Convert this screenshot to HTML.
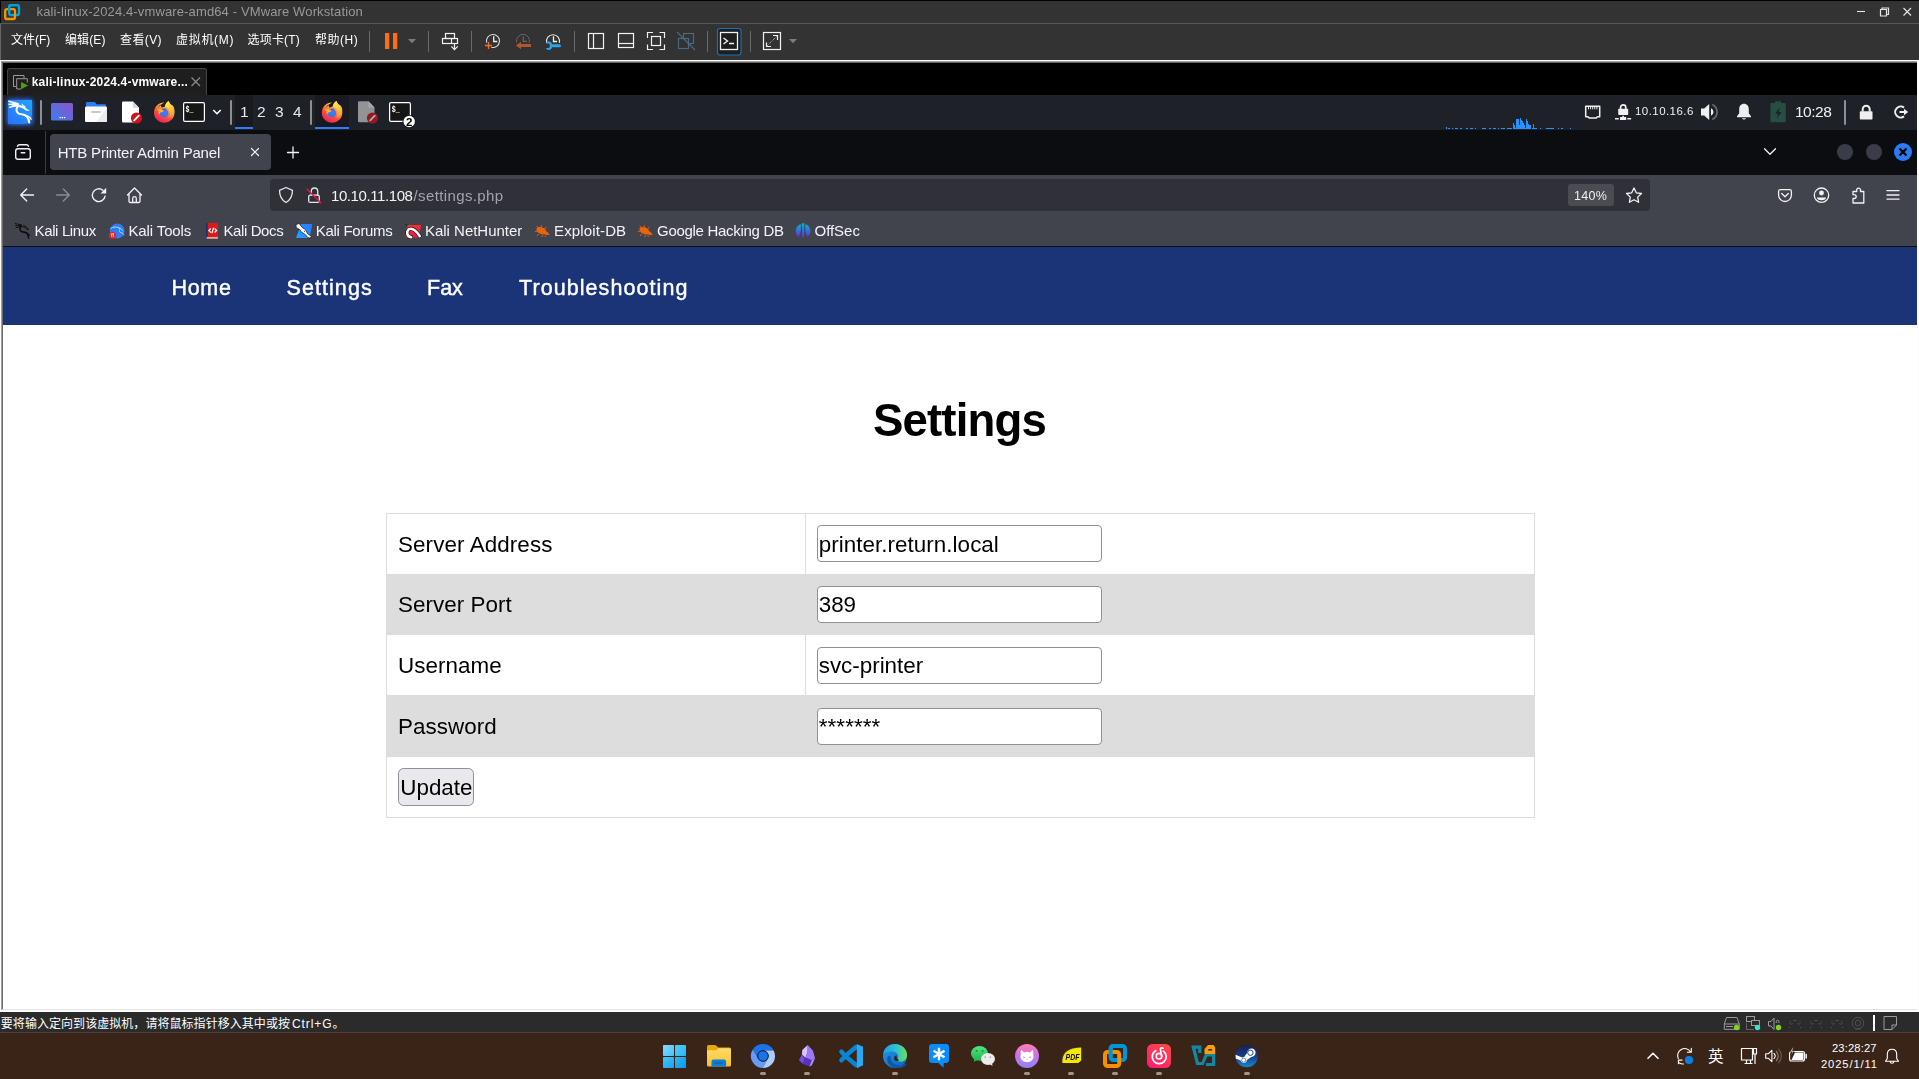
<!DOCTYPE html>
<html lang="zh-CN">
<head>
<meta charset="utf-8">
<title>kali-linux-2024.4-vmware-amd64 - VMware Workstation</title>
<style>
*{box-sizing:border-box;margin:0;padding:0}
html,body{width:1919px;height:1079px;overflow:hidden;background:#000}
body{position:relative;font-family:"Liberation Sans","Noto Sans CJK SC",sans-serif;color:#fff}
.a{position:absolute}
.t{position:absolute;white-space:nowrap;line-height:1;display:block}
svg{position:absolute;overflow:visible}
.gl{position:absolute;left:0;top:0;width:1919px;height:1079px;will-change:transform;pointer-events:none}
/* ---------- VMware chrome ---------- */
#vm-title{left:0;top:0;width:1919px;height:24px;background:#333}
#vm-title-top{left:0;top:0;width:1919px;height:1px;background:#000}
#vm-title-l{left:0;top:0;width:1px;height:23px;background:#000}
#vm-title-line{left:0;top:23px;width:1919px;height:1px;background:#575757}
#vm-menu{left:0;top:24px;width:1919px;height:36px;background:#333}
#vm-menu-l{left:0;top:24px;width:1px;height:36px;background:#666}
#vm-b1{left:0;top:60px;width:1919px;height:1px;background:#fdfdfd}
#vm-b2{left:1px;top:61px;width:1917px;height:1px;background:#a0a0a0}
#vm-b3{left:2px;top:62px;width:1915px;height:1px;background:#696969}
#vm-l1{left:0;top:60px;width:1px;height:952px;background:#fdfdfd}
#vm-l2{left:1px;top:61px;width:1px;height:949px;background:#a0a0a0}
#vm-l3{left:2px;top:62px;width:1px;height:947px;background:#696969}
#vm-r1{left:1917px;top:61px;width:2px;height:951px;background:#fdfdfd}
#vm-tabstrip{left:3px;top:63px;width:1914px;height:32px;background:#000}
#vm-tab{left:7px;top:68px;width:200px;height:28px;background:#1e1e1e;border:1px solid #454545;border-bottom:none;border-radius:3px 3px 0 0}
/* ---------- Kali panel ---------- */
#kpanel{left:3px;top:95px;width:1914px;height:35px;background:#1f2128}
.ksep{width:2px;height:25px;top:100px;background:#5d5f66;border-radius:1px}
.kact{top:95px;height:32px;background:#191a20}
.kund{top:127px;height:2px;background:#2a7fff}
/* ---------- Firefox ---------- */
#fx-tabs{left:3px;top:130px;width:1914px;height:45px;background:#0c0d11}
#fx-tab{left:50px;top:134px;width:221px;height:36px;background:#42444d;border-radius:4px}
#fx-nav{left:3px;top:175px;width:1914px;height:71px;background:#42444d}
#fx-url{left:270px;top:179px;width:1380px;height:32px;background:#303138;border-radius:4px}
#fx-zoom{left:1568px;top:184px;width:46px;height:22px;background:#4b4c53;border-radius:3px}
#fx-line{left:3px;top:246px;width:1914px;height:1px;background:#0c0d10}
/* ---------- Page ---------- */
#pg{left:3px;top:247px;width:1914px;height:762px;background:#fff;overflow:hidden}
#pg-nav{left:3px;top:247px;width:1914px;height:77.5px;background:#1b3478}
.nv{color:#fff;font-size:22px}
#tbl{left:386px;top:513px;width:1148.6px;height:304.6px;border:1px solid #ddd;background:#fff}
.row-g{left:387px;width:1146.6px;background:#ddd}
.lbl{color:#000;font-size:22.4px;left:398px}
.inp{left:816.7px;width:285.4px;height:37px;background:#fff;border:1.4px solid #8f8f9d;border-radius:4px}
/* ---------- bottom ---------- */
#vm-bb1{left:2px;top:1009px;width:1915px;height:1px;background:#e3e3e3}
#vm-bb2{left:0;top:1010px;width:1919px;height:2px;background:#fdfdfd}
#vm-status{left:0;top:1012px;width:1919px;height:20px;background:#2b2b2b}
#tb{left:0;top:1032px;width:1919px;height:47px;background:#3a2417}
#tb-line{left:0;top:1032px;width:1919px;height:1px;background:#4d3e38}
.pill{top:1072px;width:6px;height:3px;border-radius:1.5px;background:#8c8582}
</style>
</head>
<body>
<!-- VMware window chrome -->
<div class="a" id="vm-title"></div>
<div class="a" id="vm-title-top"></div>
<div class="a" id="vm-title-l"></div>
<div class="a" id="vm-title-line"></div>
<div class="a" id="vm-menu"></div>
<div class="a" id="vm-menu-l"></div>
<div class="a" id="vm-tabstrip"></div>
<div class="a" id="vm-tab"></div>
<!-- Kali panel -->
<div class="a" id="kpanel"></div>
<div class="a kact" style="left:235px;width:18px"></div><div class="a kund" style="left:235px;width:18px"></div>
<div class="a kact" style="left:315px;width:34px"></div><div class="a kund" style="left:315px;width:34px"></div>
<!-- Firefox -->
<div class="a" id="fx-tabs"></div>
<div class="a" id="fx-tab"></div>
<div class="a" id="fx-nav"></div>
<div class="a" id="fx-url"></div>
<div class="a" id="fx-zoom"></div>
<div class="a" id="fx-line"></div>
<!-- Web page -->
<div class="a" id="pg"></div>
<div class="a" id="pg-nav"></div>
<div class="a" id="tbl"></div>
<div class="a row-g" style="top:574.2px;height:60.7px"></div>
<div class="a row-g" style="top:695px;height:61.7px"></div>
<div class="a" style="left:805px;top:514px;width:1px;height:242px;background:#ddd"></div>
<div class="a row-g" style="top:574.2px;height:60.7px;left:805px;width:1px"></div>
<div class="a inp" style="top:525px"></div>
<div class="a inp" style="top:586px"></div>
<div class="a inp" style="top:647px"></div>
<div class="a inp" style="top:707.5px"></div>
<div class="a" id="btn" style="left:398px;top:768px;width:76px;height:37.6px;background:#e9e9ed;border:1.4px solid #8f8f9d;border-radius:5.6px"></div>
<div class="gl">
<span class="t lbl" style="top:534px;letter-spacing:.1px">Server Address</span>
<span class="t lbl" style="top:594px;letter-spacing:.05px">Server Port</span>
<span class="t lbl" style="top:655px;letter-spacing:.05px">Username</span>
<span class="t lbl" style="top:716px;letter-spacing:.05px">Password</span>
<span class="t lbl" style="left:818.7px;top:534px;letter-spacing:.05px">printer.return.local</span>
<span class="t lbl" style="left:818.7px;top:594px">389</span>
<span class="t lbl" style="left:818.7px;top:655px">svc-printer</span>
<span class="t lbl" style="left:818.7px;top:716px;letter-spacing:.1px">*******</span>
<span class="t lbl" style="left:400.3px;top:777px">Update</span>
</div>

<!-- bottom -->
<div class="a" id="vm-status"></div>
<div class="a" id="tb"></div>
<div class="a" id="tb-line"></div>
<!-- frame borders -->
<div class="a" id="vm-b1"></div><div class="a" id="vm-b2"></div><div class="a" id="vm-b3"></div>
<div class="a" id="vm-l1"></div><div class="a" id="vm-l2"></div><div class="a" id="vm-l3"></div>
<div class="a" id="vm-r1"></div>
<div class="a" id="vm-bb1"></div><div class="a" id="vm-bb2"></div>
<span class="t" id="vt" style="left:36.5px;top:5.2px;font-size:13px;color:#999;letter-spacing:0.13px;">kali-linux-2024.4-vmware-amd64 - VMware Workstation</span>
<span class="t" id="m1" style="left:11.0px;top:34.3px;font-size:12px;color:#fff;">文件(F)</span>
<span class="t" id="m2" style="left:65.0px;top:34.3px;font-size:12px;color:#fff;letter-spacing:0.12px;">编辑(E)</span>
<span class="t" id="m3" style="left:120.0px;top:34.3px;font-size:12px;color:#fff;letter-spacing:0.38px;">查看(V)</span>
<span class="t" id="m4" style="left:176.0px;top:34.3px;font-size:12px;color:#fff;letter-spacing:0.70px;">虚拟机(M)</span>
<span class="t" id="m5" style="left:247.5px;top:34.3px;font-size:12px;color:#fff;letter-spacing:0.20px;">选项卡(T)</span>
<span class="t" id="m6" style="left:315.0px;top:34.3px;font-size:12px;color:#fff;letter-spacing:0.50px;">帮助(H)</span>
<span class="t" id="vtab" style="left:31.7px;top:75.6px;font-size:12px;color:#fff;font-weight:700;letter-spacing:0.18px;">kali-linux-2024.4-vmware...</span>
<span class="t" id="w1" style="left:240.0px;top:104.0px;font-size:15.5px;color:#e8e8ea;">1</span>
<span class="t" id="w2" style="left:257.0px;top:104.0px;font-size:15.5px;color:#e8e8ea;">2</span>
<span class="t" id="w3" style="left:275.0px;top:104.0px;font-size:15.5px;color:#e8e8ea;">3</span>
<span class="t" id="w4" style="left:293.0px;top:104.0px;font-size:15.5px;color:#e8e8ea;">4</span>
<span class="t" id="kip" style="left:1635.0px;top:106.0px;font-size:11.5px;color:#f0f0f0;letter-spacing:0.44px;">10.10.16.6</span>
<span class="t" id="kclk" style="left:1795.0px;top:104.0px;font-size:15.5px;color:#f0f0f0;letter-spacing:-0.50px;">10:28</span>
<span class="t" id="st" style="left:0.8px;top:1018.0px;font-size:12px;color:#fff;letter-spacing:0.05px;">要将输入定向到该虚拟机，请将鼠标指针移入其中或按 </span>
<span class="t" id="st2" style="left:292.0px;top:1018.0px;font-size:12px;color:#fff;letter-spacing:0.92px;">Ctrl+G。</span>
<span class="t" id="tt" style="left:1832.0px;top:1043.0px;font-size:11.2px;color:#fff;letter-spacing:0.14px;">23:28:27</span>
<span class="t" id="td" style="left:1821.0px;top:1059.0px;font-size:11.2px;color:#fff;letter-spacing:0.88px;">2025/1/11</span>
<span class="t" id="ime" style="left:1708.0px;top:1048.0px;font-size:15.5px;color:#fff;font-family:'Noto Sans CJK SC','Liberation Sans',sans-serif;">英</span>
<div class="gl">
<span class="t" id="ftab" style="left:57.7px;top:145.0px;font-size:15px;color:#f4f4f6;letter-spacing:-0.19px;">HTB Printer Admin Panel</span>
<span class="t" id="url1" style="left:331.0px;top:187.8px;font-size:15px;color:#f4f4f6;letter-spacing:-0.41px;">10.10.11.108</span>
<span class="t" id="url2" style="left:413.5px;top:187.8px;font-size:15px;color:#a2a3ab;letter-spacing:0.38px;">/settings.php</span>
<span class="t" id="zoom" style="left:1574.0px;top:189.8px;font-size:12.5px;color:#f0f0f2;letter-spacing:0.33px;">140%</span>
<span class="t" id="b1" style="left:34.5px;top:223.0px;font-size:15px;color:#f4f4f6;letter-spacing:-0.36px;">Kali Linux</span>
<span class="t" id="b2" style="left:128.5px;top:223.0px;font-size:15px;color:#f4f4f6;letter-spacing:-0.13px;">Kali Tools</span>
<span class="t" id="b3" style="left:223.5px;top:223.0px;font-size:15px;color:#f4f4f6;letter-spacing:-0.40px;">Kali Docs</span>
<span class="t" id="b4" style="left:315.8px;top:223.0px;font-size:15px;color:#f4f4f6;letter-spacing:-0.30px;">Kali Forums</span>
<span class="t" id="b5" style="left:425.0px;top:223.0px;font-size:15px;color:#f4f4f6;letter-spacing:-0.02px;">Kali NetHunter</span>
<span class="t" id="b6" style="left:554.0px;top:223.0px;font-size:15px;color:#f4f4f6;letter-spacing:0.14px;">Exploit-DB</span>
<span class="t" id="b7" style="left:657.0px;top:223.0px;font-size:15px;color:#f4f4f6;letter-spacing:-0.29px;">Google Hacking DB</span>
<span class="t" id="b8" style="left:814.5px;top:223.0px;font-size:15px;color:#f4f4f6;letter-spacing:-0.04px;">OffSec</span>
<span class="t" id="n1" style="left:171.5px;top:278.0px;font-size:21.5px;color:#fff;letter-spacing:0.67px;-webkit-text-stroke:.45px #fff;">Home</span>
<span class="t" id="n2" style="left:286.5px;top:278.0px;font-size:21.5px;color:#fff;letter-spacing:1.07px;-webkit-text-stroke:.45px #fff;">Settings</span>
<span class="t" id="n3" style="left:427.0px;top:278.0px;font-size:21.5px;color:#fff;-webkit-text-stroke:.45px #fff;">Fax</span>
<span class="t" id="n4" style="left:519.0px;top:278.0px;font-size:21.5px;color:#fff;letter-spacing:1.07px;-webkit-text-stroke:.45px #fff;">Troubleshooting</span>
<span class="t" id="h1" style="left:873.0px;top:397.6px;font-size:45.6px;color:#000;font-weight:700;letter-spacing:-0.86px;">Settings</span>
</div>
<svg class="a" width="1919" height="1079" viewBox="0 0 1919 1079" style="left:0;top:0" fill="none">
<defs>
<linearGradient id="gKali" x1="1" y1="0" x2="0" y2="1"><stop offset="0" stop-color="#20a4ff"/><stop offset="1" stop-color="#2b70fb"/></linearGradient>
<linearGradient id="gDesk" x1="0" y1="1" x2="1" y2="0"><stop offset="0" stop-color="#3a7df2"/><stop offset="1" stop-color="#8c54c6"/></linearGradient>
<linearGradient id="gFx" x1="0.8" y1="0.05" x2="0.25" y2="1"><stop offset="0" stop-color="#ffe34a"/><stop offset="0.35" stop-color="#ffa436"/><stop offset="0.65" stop-color="#ff4a3d"/><stop offset="1" stop-color="#e8205e"/></linearGradient>
<linearGradient id="gFxFlame" x1="0.3" y1="0" x2="0.7" y2="1"><stop offset="0" stop-color="#ffee55"/><stop offset="0.6" stop-color="#ffc040"/><stop offset="1" stop-color="#ff8a3a"/></linearGradient>
<linearGradient id="gFxGlobe" x1="0.5" y1="0" x2="0.5" y2="1"><stop offset="0" stop-color="#6a5bd8"/><stop offset="0.35" stop-color="#3b7cf2"/><stop offset="1" stop-color="#2f78f0"/></linearGradient>
<filter id="fGlow" x="-40%" y="-40%" width="180%" height="180%"><feGaussianBlur stdDeviation="2.2"/></filter>
<symbol id="sFirefox" viewBox="0 0 22 23" overflow="visible">
 <path d="M11 1.9C4.8 1.9.5 6.8.5 12.4.5 18.2 5.2 22.6 11 22.6s10.500-4.400 10.500-10.200c0-2.500-.700-4.400-1.900-6.100C18.400 4.400 16.500 3.300 15.400.3 13.700 1.300 12 3.700 11.600 6.300 10.500 6.300 9.400 6.700 8.600 7.300 8 6.600 7.700 5.700 7.700 4.700 6.800 5 6.100 5.600 5.600 6.400 5.200 5.900 5 5.300 4.900 4.400 3.900 5.200 3.200 6.200 2.700 7.300Z" fill="url(#gFx)"/>
 <path d="M15.400.3C13.700 1.300 12 3.700 11.600 6.300c2.300.200 4.200 1.700 5 3.800.9 2.500.300 5.300-1.400 7.100 3.500-.600 6-3.500 6.200-6.900.1-2-.600-3.800-1.800-5.200C18.400 4.400 16.500 3.300 15.400.3Z" fill="url(#gFxFlame)"/>
 <circle cx="10.800" cy="12.600" r="4.400" fill="url(#gFxGlobe)"/>
 <path d="M3.300 9.200c2-.900 4.600-.700 7.200 1.200-.800 1.200-2.200 1.900-3.800 1.700-.500.700-.700 1.600-.500 2.500C5.500 13.500 5 12.200 5.200 11c-.700-.400-1.400-1-1.900-1.800Z" fill="#ffb52e"/>
 <path d="M9.500 8.600c1.300-.600 3-.500 4.200.1-.500.300-1.300.400-1.700 1-.900-.500-1.700-.900-2.500-1.100Z" fill="#5a4fcf"/>
</symbol>
</defs>
<!-- ===== VMware title-bar logo ===== -->
<rect x="9.200" y="5.200" width="9.800" height="9.800" rx="1.800" stroke="#00a3e0" stroke-width="2.300"/>
<rect x="5.200" y="9.200" width="9.800" height="9.800" rx="1.800" stroke="#f59400" stroke-width="2.300"/>
<path d="M9.200 13V7c0-1 .800-1.800 1.800-1.800h6" stroke="#00a3e0" stroke-width="2.300"/>
<!-- window buttons -->
<path d="M1857 11.500h8" stroke="#e6e6e6" stroke-width="1.100"/>
<path d="M1880.500 9.500h6v6.500h-6zM1882 9.500V8h6.500v6.500h-2" stroke="#e6e6e6" stroke-width="1.200"/>
<path d="M1903.500 8l7.500 7.500M1911 8l-7.500 7.500" stroke="#e6e6e6" stroke-width="1.100"/>
<!-- ===== VMware toolbar ===== -->
<g fill="#6a6a6a"><rect x="369" y="31" width="1" height="21"/><rect x="428" y="31" width="1" height="21"/><rect x="471" y="31" width="1" height="21"/><rect x="574" y="31" width="1" height="21"/><rect x="707" y="31" width="1" height="21"/><rect x="750" y="31" width="1" height="21"/></g>
<rect x="385" y="33" width="4.300" height="16" fill="#ff6c1c"/><rect x="393" y="33" width="4.300" height="16" fill="#ff6c1c"/>
<path d="M408 39h8l-4 4.200z" fill="#7d7d7d"/><path d="M789 39h8l-4 4.200z" fill="#7d7d7d"/>
<g stroke="#f2f2f2" stroke-width="1.200">
 <rect x="445.500" y="33.500" width="9" height="5"/><rect x="442.500" y="38.500" width="15" height="5"/><path d="M451.500 38.500V43.500M454.500 43.500v5.700M451.300 46.300l3.200 3.300 3.200-3.300"/>
 <path d="M486.700 42.700A6.500 6.500 0 1 1 491.300 47.300" stroke="#dcdcdc" stroke-width="1.100"/><path d="M493.700 36.300V41.500H497.300" stroke-width="1.300"/>
 <path d="M546.700 42.800A6.500 6.500 0 1 1 559.300 42.800" stroke="#e8e8e8" stroke-width="1.100"/><path d="M553.500 36.300V41.500H557" stroke-width="1.300"/>
 <rect x="588.500" y="33.500" width="15" height="15"/><path d="M593.500 33.500V48.500"/>
 <rect x="618.500" y="33.500" width="15" height="14"/><path d="M618.500 43.500H633.500"/>
 <path d="M647.500 38V32.500H653M659.500 32.500H664.500V38M664.500 44.500V49.500H659.500M653 49.500H647.500V44.500"/><rect x="651.500" y="36.500" width="9" height="9"/>
 
 <rect x="763.500" y="32.500" width="17" height="17"/><path d="M773 35.500H777.500V40M766.500 42.500V46.500H771"/><path d="M776.500 36.500L767.500 45.500" stroke-dasharray="1 1" stroke="#c8c8c8" stroke-width="1"/>
</g>
<path d="M485 45.500h7M488.500 42v7" stroke="#ff6c1c" stroke-width="1.300"/>
<path d="M516.700 42.500A6.500 6.500 0 1 1 529.300 42.500" stroke="#676767" stroke-width="1"/><path d="M523.300 36.500V41.300H526.800" stroke="#676767" stroke-width="1.200"/>
<path d="M516 45.500l5-3.800v2.300h10v3h-10v2.300z" fill="#b4562c"/>
<path d="M561 45.700a1.500 1.500 0 0 1-1.500 1.500H552a3.200 3.200 0 0 1-6.200.700l3.300.100.900-2.300-.900-2.300-3.300.100A3.200 3.200 0 0 1 552 44.200H559.500A1.500 1.500 0 0 1 561 45.700Z" fill="#2ba5ea"/>
<g stroke="#4a6b84" stroke-width="1.100"><rect x="683.500" y="33.500" width="10" height="10"/><rect x="678.500" y="38.500" width="10" height="10" fill="#333"/><path d="M677 32l18 18"/></g>
<rect x="717.500" y="28.500" width="23.500" height="26.500" rx="2.500" fill="#1e1e1e" stroke="#1f6fb5" stroke-width="1.200"/>
<rect x="720.500" y="32.500" width="17" height="17" stroke="#f2f2f2" stroke-width="1.300"/>
<path d="M723.500 38l4 3-4 3M729 43.500h5" stroke="#f2f2f2" stroke-width="1.400"/>
<!-- VM tab icon -->
<path d="M16 86.500H13.500V75.500H24V78" stroke="#9a9a9a" stroke-width="1"/><path d="M21 89H16.700V78.700H27.300V82.500" stroke="#9a9a9a" stroke-width="1"/>
<path d="M21 82l7.200 3.600L21 89.300z" fill="#4b9e0c"/>
<path d="M191.500 77.500l8.500 8.500M200 77.500l-8.500 8.500" stroke="#8a8a8a" stroke-width="1.300"/>
<!-- ===== Kali panel ===== -->
<rect x="7" y="99" width="26" height="26" rx="3" fill="#2a72f5" filter="url(#fGlow)" opacity=".95"/>
<path d="M8 100H32V113C32 120 28 124 24 124H8Z" fill="url(#gKali)"/>
<g stroke="#fff" stroke-linecap="round" stroke-linejoin="round">
 <path d="M8.800 101.300L17.700 103.700M9 104.300L17.300 104.700M9.700 107.300L17.100 105.600" stroke-width="1.400"/>
 <path d="M12.500 102.400L17.900 103.500 17.400 105.900 12.500 105.500Z" fill="#fff" stroke-width=".600"/>
 <path d="M17.700 103.700C18.100 105.300 17.100 107 16.600 109 15.900 112 18.200 114 21.800 114.300 25 114.700 27.400 116.400 28.500 119.400 28.900 120.600 29.100 121.600 29.100 122.400" stroke-width="2.100"/>
 <path d="M25 115.100C28 115.700 30.300 117.200 31.200 119.200" stroke-width="1.300"/>
 <path d="M17.800 105.100C20.500 104.800 24 106.400 26.800 109.200L29.200 110.600 26 110.300C23.500 108.200 21 107 17.600 106.800Z" fill="#fff" stroke-width=".500"/>
 <path d="M21.900 103.900L25.600 107.100 24.200 107.300Z" fill="#fff" stroke-width=".500"/>
</g>
<g fill="#8e8f94"><rect x="40" y="100" width="2" height="25" rx="1"/><rect x="230" y="100" width="2" height="25" rx="1"/><rect x="310" y="100" width="2" height="25" rx="1"/><rect x="1844" y="100" width="2" height="25" rx="1"/></g>
<rect x="51" y="103" width="22" height="17.500" rx="1.500" fill="url(#gDesk)"/><path d="M59.500 117.700h1.300M61.700 117.700h1.300M63.900 117.700h1.300" stroke="#fff" stroke-width="1.300"/>
<!-- files -->
<path d="M86 103.300a1.300 1.300 0 0 1 1.300-1.300h7.400l2 2.300h8a1.300 1.300 0 0 1 1.300 1.300V108H86z" fill="#2f7bf0"/>
<rect x="85" y="106.500" width="22" height="15.500" rx="1.200" fill="#fff"/><path d="M107 108v12.800a1.200 1.200 0 0 1-1.200 1.200H96z" fill="#ececee"/>
<rect x="91" y="111" width="10" height="2" rx="1" fill="#c9c9cc"/>
<!-- text editor -->
<path d="M122 102.700a1.200 1.200 0 0 1 1.200-1.200H133l6 6.200v13.600a1.200 1.200 0 0 1-1.200 1.200H123.200a1.200 1.200 0 0 1-1.200-1.200z" fill="#fff"/><path d="M133 101.500l6 6.200h-6z" fill="#d4d4d6"/>
<circle cx="136.500" cy="118" r="5.600" fill="#d5121b"/><path d="M134.200 120.300l4.600-4.600" stroke="#fff" stroke-width="1.900" stroke-linecap="round"/>
<use href="#sFirefox" x="153.500" y="100.600" width="21.500" height="22.500"/>
<!-- terminal -->
<rect x="183.600" y="102.600" width="20.800" height="18.800" rx="1.300" fill="#161616" stroke="#fff" stroke-width="1.200"/>
<text x="185.600" y="111.800" font-family="'Liberation Mono','DejaVu Sans Mono',monospace" font-weight="700" font-size="8.500" fill="#fff" textLength="8" lengthAdjust="spacingAndGlyphs">$_</text>
<path d="M213.300 110l3.700 3.700 3.700-3.700" stroke="#fff" stroke-width="1.600"/>
<!-- workspaces / active window -->
<use href="#sFirefox" x="321.300" y="100.600" width="21.500" height="22.500"/>
<path d="M358 102.500a1.200 1.200 0 0 1 1.200-1.200H368.500l6 6.200v13.600a1.200 1.200 0 0 1-1.200 1.200H359.200a1.200 1.200 0 0 1-1.200-1.200z" fill="#939397"/><path d="M368.500 101.300l6 6.200h-6z" fill="#a7a7ab"/>
<circle cx="372.500" cy="118" r="5.600" fill="#8e1c22"/><path d="M370.200 120.300l4.600-4.600" stroke="#b9a6a8" stroke-width="1.900" stroke-linecap="round"/>
<rect x="389.600" y="102.600" width="20.800" height="18.800" rx="1.300" fill="#161616" stroke="#fff" stroke-width="1.200"/>
<text x="391.700" y="111.800" font-family="'Liberation Mono','DejaVu Sans Mono',monospace" font-weight="700" font-size="8.500" fill="#fff" textLength="8" lengthAdjust="spacingAndGlyphs">$_</text>
<circle cx="409.200" cy="121.500" r="6.600" fill="#14151a"/><circle cx="409.200" cy="121.500" r="5.700" fill="#fff"/>
<text x="409.200" y="125.600" text-anchor="middle" font-family="'Liberation Sans',sans-serif" font-weight="700" font-size="11.500" fill="#000">2</text>
<!-- cpu graph -->
<path d="M1446 128.500h1M1448 128.500h2M1452 128.500h1M1455 128.500h3M1460 128.500h2M1466 128.500h2M1470 128.500h3M1475 128.500h1M1482 128.500h4M1489 128.500h2M1493 128.500h3M1498 128.500h1M1501 128.500h4M1507 128.500h5M1532 128.500h5M1540 128.500h1M1546 128.500h8M1558 128.500h1M1561 128.500h2M1570 128.500h1" stroke="#2393ff" stroke-width="1"/>
<path d="M1446 127h1v2h-1zM1513 129v-6h1v2h1v3h1v-9h3v6h1v-7h1v2h1v1h1v2h1v2h1v3h1v-9h1v2h1v3h1v1h2v4h2v-5h1v5z" fill="#2393ff"/>
<!-- network / vpn -->
<path d="M1585.700 106.200h14v10.500h-2.200l-1.500 1.400h-6.600l-1.500-1.400h-2.200z" stroke="#f0f0f0" stroke-width="1.500" stroke-linejoin="round"/>
<path d="M1588.500 107v2.300M1590.600 107v2.300M1592.700 107v2.300M1594.800 107v2.300M1596.900 107v2.300" stroke="#f0f0f0" stroke-width="1"/>
<rect x="1618.200" y="108.800" width="10" height="6.200" rx=".800" fill="#f0f0f0"/><path d="M1620.600 109v-1.600a2.600 2.600 0 0 1 5.200 0V109" stroke="#f0f0f0" stroke-width="1.700"/>
<path d="M1615 118.800h3.800M1627.300 118.800h3.800" stroke="#f0f0f0" stroke-width="1.600"/><rect x="1620" y="117" width="6.200" height="3" fill="#f0f0f0"/><rect x="1622.300" y="115.800" width="1.600" height="1.500" fill="#f0f0f0"/>
<!-- volume / bell / battery -->
<path d="M1701 108.500h3.200l5-4.500v16l-5-4.500H1701z" fill="#efefef"/><path d="M1711 108.300a4 4 0 0 1 0 7.400z" fill="#efefef"/><path d="M1712.300 104.500a8.300 8.300 0 0 1 0 15" stroke="#686a70" stroke-width="1.700"/>
<path d="M1744 103.800c3 0 4.800 2.300 4.800 5.200v4.300l2.200 3v.900h-14v-.900l2.200-3V109c0-2.900 1.800-5.200 4.800-5.200z" fill="#efefef"/><path d="M1742.200 118.300h3.600a1.800 1.200 0 0 1-3.600 0z" fill="#efefef"/>
<rect x="1770.400" y="103" width="15.400" height="19.200" rx="1" fill="#264e42"/><rect x="1775" y="101.300" width="6" height="2" fill="#264e42"/>
<path d="M1779.600 107.500l-4.600 6.200h3l-1.200 4.800 4.800-6.500h-3.100z" fill="#1f2128"/>
<!-- lock / logout -->
<rect x="1859.800" y="111.300" width="12.700" height="8.200" rx=".800" fill="#f0f0f0"/><path d="M1862.700 111.500v-2.300a3.500 3.500 0 0 1 7 0v2.300" stroke="#f0f0f0" stroke-width="2"/>
<path d="M1904 107.600a5.500 5.500 0 1 0 0 8.800" stroke="#f0f0f0" stroke-width="2"/><path d="M1899.500 112h5" stroke="#f0f0f0" stroke-width="2"/><path d="M1904 108.700l4.200 3.300-4.200 3.300z" fill="#f0f0f0"/>
<!-- ===== Firefox chrome ===== -->
<rect x="45" y="131" width="1" height="43" fill="#3b3c42"/>
<g stroke="#f2f2f4" stroke-width="1.400" stroke-linecap="round" stroke-linejoin="round">
 <rect x="15.700" y="148.700" width="14.600" height="10.600" rx="2.300"/><path d="M17.500 146.200c.300-1 1-1.500 2-1.500h7c1 0 1.700.500 2 1.500M21.200 152.800h3.600"/>
 <path d="M251.500 148.500l7 7M258.500 148.500l-7 7" stroke-width="1.200"/><path d="M287.500 152.500h11M293 147v11" stroke-width="1.300"/>
 <path d="M1764.500 148.800l5.500 5.500 5.500-5.500" stroke-width="1.300"/>
 <path d="M33.500 195H20.700M26.700 189l-6 6 6 6"/>
 <path d="M102.900 190.300A6.400 6.400 0 1 0 105.100 196.200"/>
 <path d="M127.500 195l7-7 7 7M129 194v7.300a1.200 1.200 0 0 0 1.200 1.200h8.600a1.200 1.200 0 0 0 1.200-1.200V194M132.700 202v-3.500a1.800 1.800 0 0 1 3.600 0V202" stroke-width="1.300"/>
 <path d="M286 187.500l6.500 2.800c0 6-2.500 10-6.500 12.200-4-2.200-6.500-6.200-6.500-12.200z" stroke-width="1.300" stroke="#e6e6e8"/>
 <rect x="308.700" y="195.200" width="10.600" height="7.200" rx="1.500" stroke-width="1.300" stroke="#e6e6e8"/><path d="M311.300 195v-3.800a3.200 3.200 0 0 1 6.400 0V195" stroke-width="1.300" stroke="#e6e6e8"/>
 <path d="M1634 188l2.300 4.800 5.200.700-3.800 3.600.900 5.200-4.600-2.500-4.600 2.500.900-5.200-3.800-3.600 5.200-.700z" stroke-width="1.300"/>
 <path d="M1780.300 189.700h9.400a1.700 1.700 0 0 1 1.700 1.700v3.700a6.400 6.400 0 0 1-12.800 0v-3.700a1.700 1.700 0 0 1 1.700-1.700zM1781.700 193.500l3.300 3.200 3.300-3.200" stroke-width="1.300"/>
 <circle cx="1821.500" cy="195.200" r="7.200" stroke-width="1.300"/>
 <path d="M1853 203V198.500h1.300a1.900 1.900 0 0 0 0-3.800H1853V191.500h3.700V190a1.900 1.900 0 0 1 3.800 0v1.500h3.300V203z" stroke-width="1.300"/>
 <path d="M1887 190.700h12M1887 195h12M1887 199.200h12" stroke-width="1.300"/>
</g>
<path d="M106.200 187.800v5.600h-5.600z" fill="#f2f2f4"/>
<path d="M56.500 195h12.800M63.300 189l6 6-6 6" stroke="#8a8b93" stroke-width="1.400" stroke-linecap="round" stroke-linejoin="round"/>
<path d="M307.200 189.200l13.600 13.600" stroke="#e8134f" stroke-width="1.400" stroke-linecap="round"/>
<circle cx="1821.500" cy="193" r="2.400" fill="#f2f2f4"/><path d="M1817 197.600h9a4.500 2.700 0 0 1-9 0z" fill="#f2f2f4"/>
<circle cx="1845" cy="152" r="8" fill="#3a3c49"/><circle cx="1874" cy="152" r="8" fill="#3a3c49"/><circle cx="1903" cy="152" r="9" fill="#2a7bf6"/>
<path d="M1899.500 148.500l7 7M1906.500 148.500l-7 7" stroke="#000" stroke-width="2.300"/>
<!-- ===== bookmarks icons ===== -->
<g stroke="#0a0a0a" stroke-linecap="round" stroke-linejoin="round" fill="none">
 <path d="M15.300 223.500l5.700 1.500M15.500 225.500l5.300.400M16 227.700l4.800-1.200" stroke-width=".900"/>
 <path d="M20.800 224.700c.400 1.300-.500 2.600-.800 3.800-.400 2 1 3.300 3.500 3.500 2.200.200 3.900 1.400 4.600 3.300.300.900.400 1.700.400 2.700" stroke-width="1.500"/>
 <path d="M26 232.700c1.900.400 3.300 1.400 4 2.900M21 226.500c2.200-.200 4.400 1 5.700 2.500l1.700.600c-1-1.700-2.700-3.300-4.700-4.200" stroke-width=".900"/>
</g>
<circle cx="117.200" cy="231" r="7.400" fill="#2a7ff5"/><path d="M110.500 228.600c2.500-1.600 5.300-2.200 8-.900 1 .500 1.300 1.600 1 2.700-.300 1.300.500 2 1.800 2.300 1.300.300 2.300 1.200 2.600 2.600M118.500 227.700c1.700.300 3.200 1.400 4.200 3" stroke="#dfeaff" stroke-width=".800" fill="none"/>
<circle cx="112.500" cy="235.300" r="3.600" fill="#e8222b"/><path d="M110.800 233.800h3.400M111.700 234v2.900M113.400 234v2.900" stroke="#fff" stroke-width=".700"/>
<rect x="206" y="223" width="12" height="15.800" rx="1" fill="#dc1a1c"/><rect x="206" y="223" width="1.600" height="15.800" fill="#1d2c6b"/><rect x="206.500" y="237.300" width="11.500" height="1.200" fill="#e9e9e9"/>
<path d="M210.800 228.500l-2 2 2 2M214.600 228.500l2 2-2 2M213.600 227.800l-1.700 5.500" stroke="#fff" stroke-width="1.200" fill="none"/>
<defs><linearGradient id="gKF" x1="1" y1="0" x2="0" y2="1"><stop offset="0" stop-color="#2a76ff"/><stop offset="1" stop-color="#20a4ff"/></linearGradient><linearGradient id="gNH" x1="0" y1="0" x2="0" y2="1"><stop offset="0" stop-color="#fb2c2e"/><stop offset="1" stop-color="#de174c"/></linearGradient></defs>
<path d="M301.200 224h10.200a.800.800 0 0 1 .800 1l-2.500 12.200a1 1 0 0 1-1 .800H296.800a.600.600 0 0 1-.600-.800z" fill="url(#gKF)"/>
<path d="M295.900 224.800l3.300-1.400 2.900 4 3.400 2.200 1.900 3.800 3.900 2.900-1 1.800-2.600-.700-2.200-2.700-4.600-3.100-.900-1.900-3.700-2z" fill="#fbfbfb" stroke="#14161b" stroke-width=".700" stroke-linejoin="round"/><circle cx="304.600" cy="231.200" r=".550" fill="#111"/>
<path d="M409.600 225h10.600a.800.800 0 0 1 .800 1l-2 11a1 1 0 0 1-1 .800H405.700a.600.600 0 0 1-.600-.800l2.300-11.200a1 1 0 0 1 1-.800z" fill="url(#gNH)"/>
<path d="M419.700 236.100C416.500 231 413.200 228.700 410.600 228.700 407.900 228.700 407 231.500 407.300 233.500 407.600 235.500 409 237 411.200 237.200" stroke="#1b1114" stroke-width="3.800" fill="none" stroke-linecap="round"/>
<path d="M419.700 236.100C416.500 231 413.200 228.700 410.600 228.700 407.900 228.700 407 231.500 407.300 233.500 407.600 235.500 409 237 411.200 237.200" stroke="#fff" stroke-width="2.600" fill="none" stroke-linecap="round"/>
<path d="M405.500 224.300l1.800 1" stroke="#121212" stroke-width="1"/>
<g id="bug1" fill="#ea640c" stroke="#ea640c"><ellipse cx="541.500" cy="230.800" rx="5.400" ry="3.300" transform="rotate(24 541.500 230.800)" stroke="none"/><circle cx="546.800" cy="233.500" r="1.700" stroke="none"/>
 <path d="M538.700 228.300l-2-2.500M541.500 227.700l-.300-2.500M544.600 229l1.800-2.200M537.200 231.300l-2.300.300M538.700 233.800l-1.500 2.200M542.300 235l-.300 2M548 234.200l1.700.300M545 235.500l.500 1.500" stroke-width=".900" fill="none"/></g>
<use href="#bug1" x="103" y="0"/>
<defs><linearGradient id="gOff1" gradientUnits="userSpaceOnUse" x1="0" y1="223" x2="0" y2="238.500"><stop offset="0" stop-color="#07bcd6"/><stop offset=".5" stop-color="#3570d6"/><stop offset="1" stop-color="#5d28e2"/></linearGradient></defs>
<path d="M800.900 223.900A7.700 7.700 0 0 0 798.600 237.100Q800.900 234 800.900 230Z" fill="url(#gOff1)"/><path d="M805.300 223.900A7.700 7.700 0 0 1 807.600 237.100Q805.300 234 805.300 230Z" fill="url(#gOff1)"/><path d="M802 223.300h2.200v12.700l-1.100 2.400-1.100-2.400z" fill="url(#gOff1)"/>
<!-- ===== VMware status-bar device icons ===== -->
<g stroke="#9b9b9b" stroke-width="1" fill="none">
 <path d="M1726.500 1017.500h10.500l2.300 6.500v5.300h-15V1024zM1724.500 1024h14.500M1726 1026.500h7"/>
 <rect x="1746.500" y="1016.500" width="8" height="5"/><rect x="1751.500" y="1020.500" width="8" height="5" fill="#2b2b2b"/>
 <path d="M1746.500 1023.500v6h8" stroke-dasharray="1 1"/>
 <path d="M1768.500 1021.500h2.500l3-3.500v11.500l-3-3.500h-2.500z"/><path d="M1776.300 1023v-1.500a1.300 1.300 0 0 1 2.600 0v1.500"/>
 <path d="M1884 1016.500h12.500v8.500l-4.500 4.500h-8zM1896.500 1025h-4.500v4.500"/>
</g>
<circle cx="1736.500" cy="1027.500" r="2.700" fill="#80d41f"/><circle cx="1757.500" cy="1027.500" r="2.700" fill="#3fe0d2"/><circle cx="1778.500" cy="1027.500" r="2.700" fill="#80d41f"/>
<g stroke="#555" stroke-width="1" fill="none" id="dimdev"><path d="M1789.500 1023l1.500 1.500 1.500-1.500M1797.500 1023l1.500 1.500 1.500-1.500M1793.500 1020.500h3"/><path d="M1790 1021.500h.010M1800 1021.500h.010M1789.500 1027.500h.010M1800.500 1027.500h.010" stroke-linecap="square"/></g>
<use href="#dimdev" x="21"/><use href="#dimdev" x="42"/>
<circle cx="1858" cy="1023" r="5.800" stroke="#505050" stroke-width="1"/><circle cx="1858" cy="1023" r="2.800" stroke="#505050" stroke-width="1"/><path d="M1855 1029h6" stroke="#505050"/>
<rect x="1873" y="1015" width="2" height="16" fill="#fff"/>
<!-- ===== Windows taskbar ===== -->
<defs>
<linearGradient id="gW1" x1="0" y1="0" x2="1" y2="1"><stop offset="0" stop-color="#86d9fc"/><stop offset="1" stop-color="#48c0f9"/></linearGradient>
<linearGradient id="gW2" x1="0" y1="0" x2="1" y2="1"><stop offset="0" stop-color="#50ccfc"/><stop offset="1" stop-color="#2cb4f8"/></linearGradient>
<linearGradient id="gW3" x1="0" y1="0" x2="1" y2="1"><stop offset="0" stop-color="#42c6fb"/><stop offset="1" stop-color="#1aa4f0"/></linearGradient>
<linearGradient id="gW4" x1="0" y1="0" x2="1" y2="1"><stop offset="0" stop-color="#2cb6f9"/><stop offset="1" stop-color="#0d97eb"/></linearGradient>
<linearGradient id="gFold" x1="0" y1="0" x2="0" y2="1"><stop offset="0" stop-color="#ffdb6a"/><stop offset="1" stop-color="#f7c12e"/></linearGradient>
<linearGradient id="gCat" x1="0.5" y1="0" x2="0.5" y2="1"><stop offset="0" stop-color="#ff7fb0"/><stop offset=".45" stop-color="#cf70e6"/><stop offset="1" stop-color="#8a84ff"/></linearGradient>
<linearGradient id="gNE" x1="0.8" y1="0" x2="0.2" y2="1"><stop offset="0" stop-color="#ff454a"/><stop offset="1" stop-color="#ff1d70"/></linearGradient>
<linearGradient id="gSteam" x1="0.5" y1="0" x2="0.5" y2="1"><stop offset="0" stop-color="#1a1f4e"/><stop offset=".5" stop-color="#173d86"/><stop offset="1" stop-color="#1588d0"/></linearGradient>
<linearGradient id="gWe" x1="0.5" y1="0" x2="0.5" y2="1"><stop offset="0" stop-color="#55e285"/><stop offset="1" stop-color="#1eb84b"/></linearGradient>
<linearGradient id="gEdgeA" x1="0" y1="0" x2="1" y2="0"><stop offset="0" stop-color="#1fa0e8"/><stop offset=".55" stop-color="#2cc3d0"/><stop offset="1" stop-color="#6fe04f"/></linearGradient>
<linearGradient id="gEdgeB" x1="0" y1="0" x2="1" y2="1"><stop offset="0" stop-color="#2398ea"/><stop offset="1" stop-color="#0c62bc"/></linearGradient>
</defs>
<rect x="663" y="1045" width="11" height="11" rx=".800" fill="url(#gW1)"/><rect x="675" y="1045" width="11" height="11" rx=".800" fill="url(#gW2)"/><rect x="663" y="1057" width="11" height="11" rx=".800" fill="url(#gW3)"/><rect x="675" y="1057" width="11" height="11" rx=".800" fill="url(#gW4)"/>
<!-- explorer -->
<path d="M707 1046.500a1.500 1.500 0 0 1 1.500-1.500h6.300a2 2 0 0 1 1.400.600l1.900 1.900H729.500a1.500 1.500 0 0 1 1.500 1.500v4H707z" fill="#e9a800"/>
<path d="M707 1050.300h9.200l2-2h11.300a1.500 1.500 0 0 1 1.500 1.500V1065a1.500 1.500 0 0 1-1.500 1.500H708.500a1.500 1.500 0 0 1-1.500-1.500z" fill="url(#gFold)"/>
<path d="M711.500 1066.500v-5a2 2 0 0 1 2-2h10.600a2 2 0 0 1 2 2v5z" fill="#0d7dd6"/><path d="M714.500 1063h8.500" stroke="#0a62ad" stroke-width="1.200"/>
<!-- chromium -->
<path d="M752.8 1049.5L758.2 1058.8A5.600 5.600 0 0 1 763 1050.400L773.700 1050.400A12.100 12.100 0 0 0 752.800 1049.500Z" fill="#1a73e8"/>
<path d="M773.700 1050.400L763 1050.400A5.600 5.600 0 0 1 767.800 1058.800L762.500 1068.100A12.100 12.100 0 0 0 773.700 1050.400Z" fill="#aecbfa"/>
<path d="M762.500 1068.100L767.800 1058.800A5.600 5.600 0 0 1 758.200 1058.800L752.800 1049.500A12.100 12.100 0 0 0 762.500 1068.100Z" fill="#669df6"/>
<circle cx="763" cy="1056" r="5.300" fill="#1a73e8" stroke="#0b1320" stroke-width=".800"/>
<!-- obsidian -->
<path d="M807.700 1045.100l-5.400 4.800-.400 4.700 3.700 3.100 2.100-6.500z" fill="#d6c4fd"/>
<path d="M807.700 1045.100l5.100 5.400 2.300 7.800-3.400 2-6.100-2.600 2.100-6.500z" fill="#9d78f6"/>
<path d="M801.900 1054.600l-3 5.400 4 4.100 2.100-5.800z" fill="#7748e2"/>
<path d="M805.600 1057.700l-.600.600-2.100 5.800 6.500 2.400 2.300-6.200z" fill="#5a30c3"/>
<path d="M811.700 1060.300l3.400-2-3.400 7.100-2.300 1.100z" fill="#ab8ff8"/>
<!-- vscode -->
<path d="M856 1047L845.300 1056 841.400 1051.700M856 1065L845.300 1056 841.400 1060.300" stroke="#0b85d1" stroke-width="4.400" stroke-linecap="round" stroke-linejoin="round"/>
<path d="M856.800 1043.900l6.200 2.800v18.600l-6.200 2.900z" fill="#2aa8f2"/>
<!-- edge -->
<circle cx="895" cy="1056" r="12" fill="url(#gEdgeB)"/>
<path d="M883.300 1053.500c.900-5.500 5.700-9.500 11.700-9.500 6.700 0 12 5 12 11 0 4-2.800 6.800-6.300 6.800-2.700 0-4-1.500-3.700-2.700.200-.800 1.200-1.200 1.200-2.800 0-2.600-2.500-4.800-6-4.800-4.300 0-7.800 2-8.900 2z" fill="url(#gEdgeA)"/>
<path d="M890.500 1056c-.500 5 3.500 9.500 9 9.500 2.300 0 4.500-.700 6.300-1.800.500-.300.900.300.600.700-2.200 2.600-5.600 3.600-9.400 3.600-4.500 0-8.700-3-9.700-7.500-.700-3 .800-5.500 3.200-4.500z" fill="#0c58a8"/>
<path d="M896.500 1055.500a2.800 2.800 0 1 0 2.500 4.500c-1.500-.500-2.500-2.500-2.500-4.500z" fill="#3a2418"/>
<!-- TIM -->
<path d="M932 1044h14a3 3 0 0 1 3 3v13a3 3 0 0 1-3 3h-2.200l-.400 4.800-5-4.800H932a3 3 0 0 1-3-3v-13a3 3 0 0 1 3-3z" fill="#0a8cfb"/>
<path d="M939 1047.700v12.600M933.500 1050.800l11 6.400M944.500 1050.800l-11 6.400" stroke="#fff" stroke-width="2.400"/>
<!-- wechat -->
<path d="M974.200 1058.800l-.500 3 3-1.400z" fill="#1fb94c"/><ellipse cx="979.500" cy="1053.400" rx="8.500" ry="7.400" fill="url(#gWe)"/><circle cx="976.600" cy="1050.900" r="1" fill="#16903a"/><circle cx="982.600" cy="1050.900" r="1" fill="#16903a"/>
<path d="M991.700 1063.500l1.200 2.200-3-1z" fill="#e6e6e6"/><ellipse cx="988" cy="1059" rx="7" ry="6" fill="#ececec"/><circle cx="985.200" cy="1057.100" r=".900" fill="#a9a9a9"/><circle cx="990.300" cy="1057.100" r=".900" fill="#a9a9a9"/>
<!-- cat -->
<circle cx="1027" cy="1056" r="12" fill="url(#gCat)"/>
<path d="M1021.200 1049.800l2.800 2.700a7 7 0 0 1 6 0l2.800-2.700c.600 1.800.700 3.500.400 5 .300.700.400 1.300.400 2 0 3-3 5.400-6.600 5.400s-6.600-2.400-6.600-5.400c0-.700.100-1.300.400-2-.300-1.500-.200-3.200.400-5z" fill="#fff"/>
<path d="M1023 1056.800l2.200.900M1031 1056.800l-2.200.900M1026.600 1059.300h.800" stroke="#e58be0" stroke-width="1"/>
<!-- sumatra -->
<path d="M1081.200 1047.300v13.200l-3 2.700h-16.400c-.500-3-.300-6.500 1.500-9.500 2.500-4 7-6.400 17.900-6.400z" fill="#3b3b44"/>
<path d="M1081.200 1047.600v12.900l-3 2.600h-15.700c-.300-2.900 0-5.900 1.700-8.600 2.400-3.800 6.800-6.600 17-6.900z" fill="#f7e600"/>
<text x="1065.600" y="1060" font-family="'Liberation Sans',sans-serif" font-weight="700" font-style="italic" font-size="8.200" fill="#111" textLength="14" lengthAdjust="spacingAndGlyphs">PDF</text>
<!-- vmware -->
<rect x="1110.700" y="1046" width="14.300" height="14" rx="2.500" stroke="#0095db" stroke-width="4"/>
<rect x="1105" y="1052" width="14.200" height="14" rx="2.500" stroke="#f58f00" stroke-width="4"/>
<path d="M1110.700 1057.500V1048.500a2.500 2.500 0 0 1 2.500-2.500H1119" stroke="#0095db" stroke-width="4"/>
<!-- netease -->
<rect x="1147" y="1044" width="24" height="24" rx="5.500" fill="url(#gNE)"/>
<path d="M1155.800 1050.600a7 7 0 1 0 7.600.500" stroke="#fff" stroke-width="1.800" stroke-linecap="round"/><circle cx="1159" cy="1056.200" r="2.800" stroke="#fff" stroke-width="1.600"/><path d="M1161.700 1056.500l-1.300-7.200c-.200-1 .600-1.500 1.500-1.400l1.200.300" stroke="#fff" stroke-width="1.600" stroke-linecap="round"/>
<!-- VS teal/orange -->
<path d="M1191.200 1045.600h10.200v7.500h-3.300v-4.300h-2.600l3.300 13.200h2.800l3.600-8.700h10v12.700h-9.200v-3h6v-6.600h-4.700l-3.700 8.700h-7.400z" fill="#1387a8"/>
<path d="M1208 1045.100h5.700l1.500 2.500v6.400h-10.700v-5zM1208.600 1049l-.800 1.500h4.600l-.800-1.500z" fill="#f89d0f" fill-rule="evenodd"/>
<!-- steam -->
<circle cx="1246.700" cy="1056" r="11.300" fill="url(#gSteam)"/>
<path d="M1235.500 1054.800l6.700 2.700a3.200 3.200 0 0 1 2-.400l3-4.400a4.200 4.200 0 1 1 4 4.200l-4.300 3.100a3.200 3.200 0 0 1-6.300.500l-4.800-2z" fill="#fff"/>
<circle cx="1250.400" cy="1052.700" r="2.700" fill="none" stroke="#27407f" stroke-width="1"/><circle cx="1243.700" cy="1060.200" r="2.100" fill="none" stroke="#3b6fb0" stroke-width=".800"/>
<!-- running pills -->
<g fill="#a0968f"><rect x="760" y="1072" width="6" height="3" rx="1.500"/><rect x="804" y="1072" width="6" height="3" rx="1.500"/><rect x="892" y="1072" width="6" height="3" rx="1.500"/><rect x="1024" y="1072" width="6" height="3" rx="1.500"/><rect x="1068" y="1072" width="6" height="3" rx="1.500"/><rect x="1112" y="1072" width="6" height="3" rx="1.500"/><rect x="1156" y="1072" width="6" height="3" rx="1.500"/><rect x="1244" y="1072" width="6" height="3" rx="1.500"/></g>
<!-- tray -->
<g stroke="#fff" fill="none" stroke-linecap="round" stroke-linejoin="round">
 <path d="M1648 1058.300l5-5 5 5" stroke-width="1.600"/>
 <path d="M1678.300 1058.500a7 7 0 0 1 12.200-6.800M1691.300 1048.300v3.900h-3.900M1679 1062.700a7 7 0 0 0 4.500 1.300M1678.400 1063.800v-3.700h3.700" stroke-width="1.100"/>
 <path d="M1741.500 1048.500h11v11.500h-11zM1744.500 1063.500h8M1746.500 1060v3.500M1750.500 1060v3.500" stroke-width="1.200" stroke-linecap="butt"/><path d="M1753.500 1048.500h3v5.500h-3zM1755 1054v10" stroke-width="1.200" stroke-linecap="butt"/>
 <path d="M1765.700 1053.800h2.500l3.700-3.500v11.400l-3.700-3.500h-2.500z" stroke-width="1.100"/><path d="M1774 1053.500a3.600 3.600 0 0 1 0 5" stroke-width="1.100"/><path d="M1776.300 1051.300a6.800 6.800 0 0 1 0 9.400" stroke-width="1.100" stroke="#9a8e88"/><path d="M1778.600 1049.200a9.800 9.800 0 0 1 0 13.600" stroke-width="1.100" stroke="#6e5e56"/>
 <rect x="1789.600" y="1051.500" width="15" height="9.500" rx="2" stroke-width="1.100"/><path d="M1806.200 1054.500v3.500" stroke-width="1.400"/>
 <path d="M1892 1049.300c3 0 4.700 2.300 4.700 5.200v4l1.800 2.700h-13l1.800-2.700v-4c0-2.900 1.700-5.200 4.700-5.200zM1890.300 1061.800a1.700 1.400 0 0 0 3.400 0" stroke-width="1.100"/>
</g>
<path d="M1791.500 1060l3.500-7.500h8.500v7.500z" fill="#fff"/><path d="M1792.500 1047.700l-2.300 4h2l-1 3.300 3-4.300h-2l1.300-3z" fill="#fff" stroke="#3a2318" stroke-width=".600"/>
<circle cx="1689" cy="1060" r="4.100" fill="#0b80e2"/>
</svg>

</body>
</html>
